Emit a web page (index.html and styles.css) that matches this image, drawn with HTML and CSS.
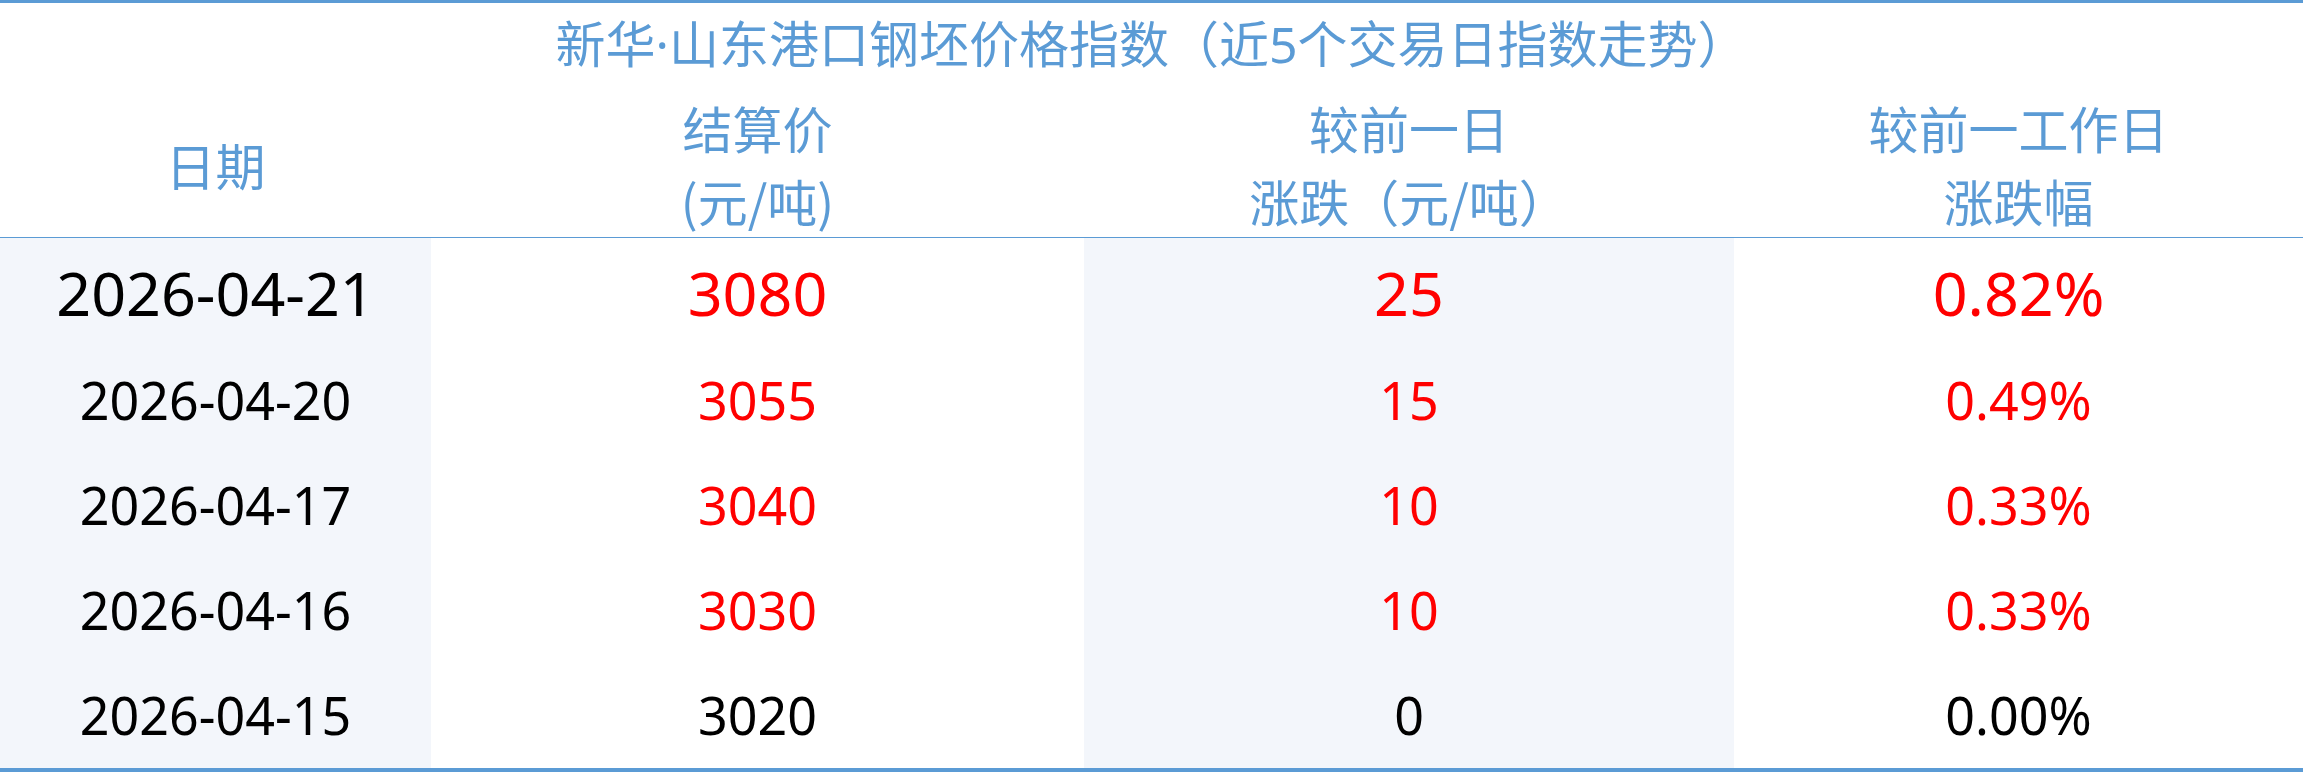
FILE: index.html
```html
<!DOCTYPE html>
<html lang="zh-CN">
<head>
<meta charset="utf-8">
<title>新华·山东港口钢坯价格指数</title>
<link rel="stylesheet" href="styles.css">
</head>
<body>
<div class="panel">
  <table class="index-table">
    <colgroup>
      <col class="c-date">
      <col class="c-price">
      <col class="c-chg">
      <col class="c-pct">
    </colgroup>
    <thead>
      <tr class="title-row">
        <th colspan="4">新华·山东港口钢坯价格指数（近5个交易日指数走势）</th>
      </tr>
      <tr class="head-row">
        <th>日期</th>
        <th>结算价<br>(元/吨)</th>
        <th>较前一日<br>涨跌（元/吨）</th>
        <th>较前一工作日<br>涨跌幅</th>
      </tr>
    </thead>
    <tbody>
      <tr class="row-latest">
        <td class="shade">2026-04-21</td>
        <td class="up">3080</td>
        <td class="shade up">25</td>
        <td class="up">0.82%</td>
      </tr>
      <tr>
        <td class="shade">2026-04-20</td>
        <td class="up">3055</td>
        <td class="shade up">15</td>
        <td class="up">0.49%</td>
      </tr>
      <tr>
        <td class="shade">2026-04-17</td>
        <td class="up">3040</td>
        <td class="shade up">10</td>
        <td class="up">0.33%</td>
      </tr>
      <tr>
        <td class="shade">2026-04-16</td>
        <td class="up">3030</td>
        <td class="shade up">10</td>
        <td class="up">0.33%</td>
      </tr>
      <tr>
        <td class="shade">2026-04-15</td>
        <td>3020</td>
        <td class="shade">0</td>
        <td>0.00%</td>
      </tr>
    </tbody>
  </table>
</div>
</body>
</html>
```

FILE: styles.css
```css
html, body {
  margin: 0;
  padding: 0;
  background: #ffffff;
}

.panel {
  width: 2303px;
  border-top: 3px solid #5b9bd5;
  border-bottom: 4px solid #5b9bd5;
  box-sizing: border-box;
}

.index-table {
  width: 100%;
  border-collapse: collapse;
  table-layout: fixed;
  font-family: "Noto Sans", "Noto Sans CJK SC", sans-serif;
}

.c-date { width: 431px; }
.c-price { width: 653px; }
.c-chg { width: 650px; }
.c-pct { width: 569px; }

.index-table th {
  font-weight: normal;
  color: #5b9bd5;
  font-size: 50px;
  text-align: center;
  padding: 0;
}

.title-row th {
  height: 82px;
  line-height: 82px;
  font-family: "Noto Sans", "Noto Sans CJK SC", sans-serif;
}

.head-row th {
  line-height: 73px;
  padding-top: 6px;
  vertical-align: middle;
  border-bottom: 1px solid #5b9bd5;
  font-family: "Noto Sans CJK SC", sans-serif;
}

.index-table td {
  height: 105px;
  padding: 0;
  text-align: center;
  vertical-align: middle;
  font-size: 52px;
  line-height: 1.2;
  color: #000000;
}

.index-table .row-latest td {
  height: 110px;
  font-size: 61px;
}

.index-table td.shade {
  background: #f3f6fb;
}

.index-table td.up {
  color: #ff0000;
}
```
